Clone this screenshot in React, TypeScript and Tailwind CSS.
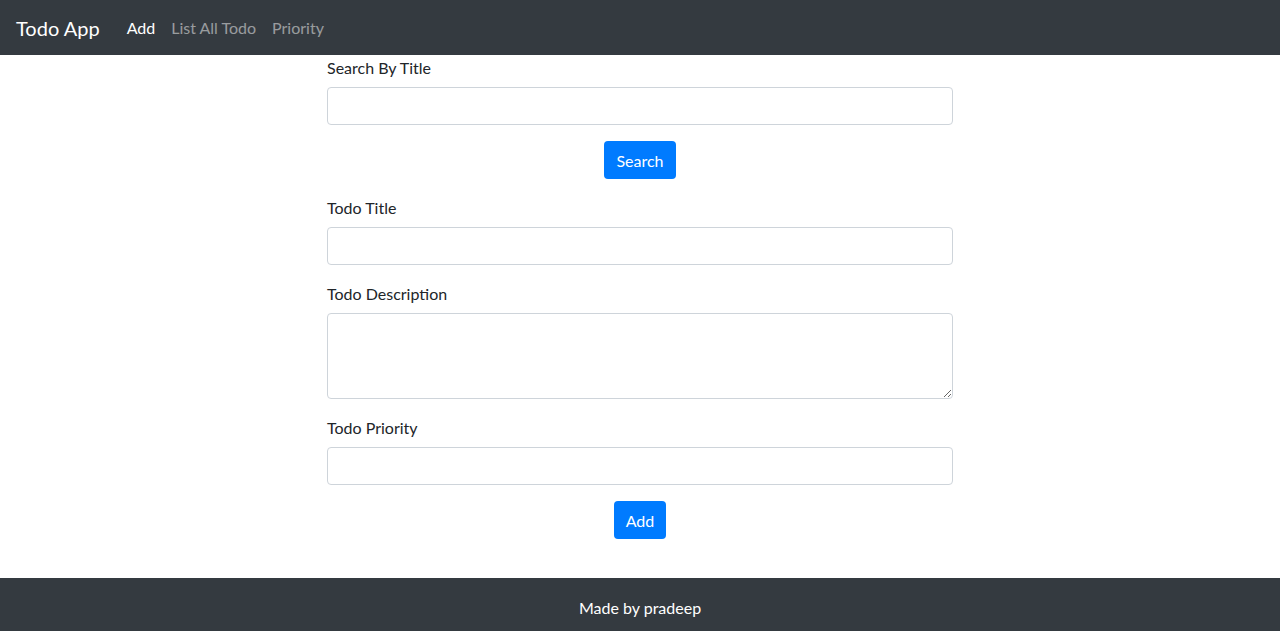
import React from "react";

const FONT = "font-['Lato','Liberation_Sans',sans-serif]";

function Field({ label, textarea }: { label: string; textarea?: boolean }) {
  return (
    <div className="mb-4 flex flex-col">
      <label className="mb-[7px] pt-px text-base leading-6 text-[#212529]">{label}</label>
      {textarea ? (
        <textarea className="h-[86px] w-full rounded border border-[#ced4da] bg-white px-3 py-1.5 outline-none" />
      ) : (
        <input
          type="text"
          className="h-[38px] w-full rounded border border-[#ced4da] bg-white px-3 outline-none"
        />
      )}
    </div>
  );
}

export default function App() {
  return (
    <div className={`flex min-h-screen flex-col bg-white ${FONT}`}>
      {/* Navbar */}
      <nav className="flex h-[55px] items-center bg-[#343a40] px-4">
        <span className="mr-[19px] text-[20px] leading-[30px] text-white">Todo App</span>
        <a className="px-2 text-base text-white">Add</a>
        <a className="px-2 text-base text-white/50">List All Todo</a>
        <a className="px-2 text-base text-white/50">Priority</a>
      </nav>

      {/* Forms */}
      <main className="mx-auto w-[626px] flex-1 pb-[23px]">
        <Field label="Search By Title" />
        <div className="mb-4 flex justify-center">
          <button className="h-[38px] rounded bg-[#007bff] px-3 pt-px text-base text-white">
            Search
          </button>
        </div>
        <Field label="Todo Title" />
        <Field label="Todo Description" textarea />
        <Field label="Todo Priority" />
        <div className="mb-4 flex justify-center">
          <button className="h-[38px] rounded bg-[#007bff] px-3 pt-px text-base text-white">
            Add
          </button>
        </div>
      </main>

      {/* Footer */}
      <footer className="flex h-[58px] items-start justify-center bg-[#343a40] pt-[18px] text-base leading-6 text-white">
        Made by pradeep
      </footer>
    </div>
  );
}
